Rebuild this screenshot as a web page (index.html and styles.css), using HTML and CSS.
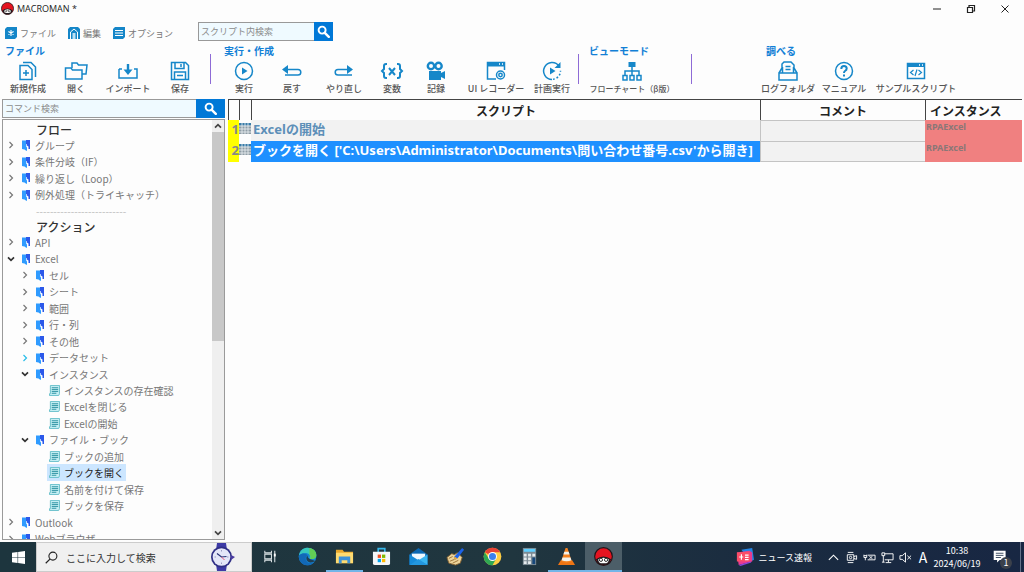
FILE: index.html
```html
<!DOCTYPE html>
<html lang="ja">
<head>
<meta charset="utf-8">
<title>MACROMAN *</title>
<link rel="stylesheet" href="styles.css">
</head>
<body>
<svg class="defs" aria-hidden="true">
  <symbol id="search" viewBox="0 0 16 16"><circle cx="6.3" cy="6.3" r="4.3" fill="none" stroke="currentColor" stroke-width="2.4"/><path d="M9.6 9.6 14.5 14.5" stroke="currentColor" stroke-width="3" stroke-linecap="round"/></symbol>
  <symbol id="arrow" viewBox="0 0 8 8"><path d="M2.5 1 5.5 4 2.5 7" fill="none" stroke="currentColor" stroke-width="1.2"/></symbol>
  <symbol id="down" viewBox="0 0 8 8"><path d="M1 2.3 4 5.3 7 2.3" fill="none" stroke="currentColor" stroke-width="1.7"/></symbol>
  <symbol id="folder" viewBox="0 0 10 12"><path d="M1 1.5h4.500v9.500L1 10z" fill="#2f9bff"/><path d="M5 1h4v9H7.500V7.500L5 6z" fill="#2b58ea"/><path d="M5.500 5v3" stroke="#d4e8ff" stroke-width=".8"/><path d="M4 7.500l2 1V12l-2-1z" fill="#2f9bff"/></symbol>
  <symbol id="doc" viewBox="0 0 12 12"><path d="M1.5.5h10v9l-1 2h-10v-2h1z" fill="#c4eef3" stroke="#62bdc8"/><path d="M3 3h7M3 5h7M3 7h7M3 9h5" stroke="#248c9e"/></symbol>
  <symbol id="mushroom" viewBox="0 0 20 20"><circle cx="10" cy="10" r="9.3" fill="#e51420" stroke="#231519" stroke-width="1.2"/><path d="M2 13Q10 7 18 13q-2 6-8 6t-8-6" fill="#201a1e"/><path d="M4.500 13Q10 9.500 15.500 13q0 3.500-2.500 4H7q-2.500-.5-2.500-4" fill="#fff"/><circle cx="7.300" cy="13.500" r="1.700" fill="#fff" stroke="#222"/><circle cx="12.700" cy="13.500" r="1.700" fill="#fff" stroke="#222"/></symbol>
  <symbol id="rowgrid" viewBox="0 0 12 11"><path d="M0 0h12v11H0z" fill="#8f9da6"/><path d="M0 0h12v2.500H0z" fill="#397ca8"/><path d="M0 3h12M0 6h12M0 9h12M3 0v11M6 0v11M9 0v11" stroke="#edf2f5" stroke-width=".8"/></symbol>
</svg>

<header class="titlebar">
  <svg class="app-icon"><use href="#mushroom"/></svg>
  <h1 class="title">MACROMAN *</h1>
  <div class="window-buttons">
    <button aria-label="最小化"><svg viewBox="0 0 10 10"><path d="M1 5h8" stroke="#222"/></svg></button>
    <button aria-label="元に戻す"><svg viewBox="0 0 10 10"><path d="M1.500 3.500h5v5h-5zM3 3V1.500h5.500V7H7" fill="none" stroke="#222" stroke-width="1.200"/></svg></button>
    <button aria-label="閉じる"><svg viewBox="0 0 10 10"><path d="M1.500 1.500 8.500 8.500M8.500 1.500 1.500 8.500" stroke="#222"/></svg></button>
  </div>
</header>

<nav class="menubar">
  <div class="menus">
    <button class="menu"><svg viewBox="0 0 12 12"><path d="M2 0h10v10l-2 2H0V2z" fill="#1586c8"/><path d="M6 3v6M3.400 4.500l5.200 3M8.600 4.500l-5.200 3" stroke="#fff" stroke-width="1.100"/></svg>ファイル</button>
    <button class="menu"><svg viewBox="0 0 12 12"><path d="M2 0h8l2 2v10H0V2z" fill="#1586c8"/><path d="M2.500 12V5L6 2l3.500 3v7" fill="none" stroke="#fff"/><path d="M4.500 6h3v6h-3z" fill="#bce0f4"/></svg>編集</button>
    <button class="menu"><svg viewBox="0 0 12 12"><path d="M2 0h10v10l-2 2H0V2z" fill="#1586c8"/><path d="M2 3.500h8M2 6h8M2 8.500h8" stroke="#fff"/></svg>オプション</button>
  </div>
  <form class="search script-search">
    <input type="text" placeholder="スクリプト内検索" aria-label="スクリプト内検索">
    <button type="button" aria-label="検索"><svg><use href="#search"/></svg></button>
  </form>
</nav>

<section class="ribbon">
  <div class="group">
    <h2>ファイル</h2>
    <div class="tools">
      <button class="tool"><svg viewBox="0 0 20 20"><path d="M2 4.500h8l4 4v10H2z"/><path d="M5 1.500h8l4.500 4.500V16"/><path d="M8 9v6M5 12h6"/></svg>新規作成</button>
      <button class="tool"><svg class="wide-icon" viewBox="0 0 24 20"><path d="M8 7V2h5l1.500 2H23l-1 9h-4"/><path d="M1.500 18V7H7l1.500 2H18v9z"/></svg>開く</button>
      <button class="tool w56"><svg viewBox="0 0 20 20"><path d="M1 8v9h18V8h-3M1 8h3"/><path d="M10 3v8" stroke-width="2.400"/><path class="solid" d="M5.500 8.500h9L10 14z"/></svg>インポート</button>
      <button class="tool"><svg viewBox="0 0 20 20"><path d="M1.500 1.500h14l3 3v14h-17z"/><path d="M5 2v5.500h9V2M11 3v3M4.500 18v-7h11v7M7 14.500h6"/></svg>保存</button>
    </div>
  </div>
  <div class="group run">
    <h2>実行・作成</h2>
    <div class="tools">
      <button class="tool"><svg viewBox="0 0 20 20"><circle cx="10" cy="10" r="8.500"/><path class="solid" d="M8 6.500v7l5.500-3.500z"/></svg>実行</button>
      <button class="tool"><svg viewBox="0 0 20 20"><path d="M3 8.500h13a2.800 2.800 0 0 1 0 5.600H3"/><path class="solid" d="M0 8.500 6 4v9z"/></svg>戻す</button>
      <button class="tool w56"><svg viewBox="0 0 20 20"><path d="M17 8.500H4a2.800 2.800 0 0 0 0 5.600h14"/><path class="solid" d="M19 8.500 13 4v9z"/></svg>やり直し</button>
      <button class="tool w40"><svg class="wide-icon" viewBox="0 0 24 20"><path d="M7 3H6Q4 3 4 5v3L2 10l2 2v3q0 2 2 2h1M17 3h1q2 0 2 2v3l2 2-2 2v3q0 2-2 2h-1M9 7l6 7M15 7l-6 7" stroke-width="2"/></svg>変数</button>
      <button class="tool"><svg viewBox="0 0 20 20"><circle cx="5" cy="5" r="3.200" stroke-width="2.400"/><circle cx="12.500" cy="5" r="3.200" stroke-width="2.400"/><path class="solid" d="M3 10h12v2l4-2v8l-4-2v3H3z"/></svg>記録</button>
      <button class="tool w72"><svg viewBox="0 0 20 20"><path d="M10 18H1.500V1.500h17V9"/><path class="solid" d="M1 1h18v4.500H1z"/><path d="M13 3h1M16 3h1" stroke="#fff"/><circle cx="14.500" cy="14" r="4"/><circle cx="14.500" cy="14" r="1.700"/></svg>UI レコーダー</button>
      <button class="tool w40"><svg viewBox="0 0 20 20"><path d="M17 5a8.500 8.500 0 1 0-7 13.500"/><path d="M11 18.300a8.500 8.500 0 0 0 7.500-8.500" stroke-dasharray="1.800 2"/><path class="solid" d="M18.500 1v6h-6zM8 6.500v7l5.500-3.500z"/></svg>計画実行</button>
    </div>
  </div>
  <div class="group view">
    <h2>ビューモード</h2>
    <div class="tools">
      <button class="tool w88"><svg viewBox="0 0 20 20"><path class="solid" d="M6.500 1h7v5h-7z"/><path d="M10 6v8M3 14v-4h14v4M1 14.500h4V19H1zM8 14.500h4V19H8zM15 14.500h4V19h-4z"/></svg>フローチャート（β版）</button>
    </div>
  </div>
  <div class="group inspect">
    <h2>調べる</h2>
    <div class="tools">
      <button class="tool w56"><svg viewBox="0 0 20 20"><path d="M1 12h18v7H1zM1 12l3-5v-4l2-2h7l3 3v3l3 5M4.500 12V6M15.500 12V6M7.500 5.500h5M7.500 8.500h5"/></svg>ログフォルダ</button>
      <button class="tool w56"><svg viewBox="0 0 20 20"><circle cx="10" cy="10" r="8.500"/><path d="M7.300 8q0-3 2.700-3t2.700 2.500q0 1.500-1.700 2.500-1 .7-1 2M10 13.500v2" stroke-width="2"/></svg>マニュアル</button>
      <button class="tool w88"><svg viewBox="0 0 20 20"><path d="M1.500 2.500h17v15h-17z"/><path class="solid" d="M1 2h18v4H1z"/><path d="M13 4h1M16 4h1" stroke="#fff"/><path d="M7.500 9 4.500 11.500l3 2.500M12.500 9l3 2.500-3 2.500M11 8.500l-2 6.500" stroke-width="1.200"/></svg>サンプルスクリプト</button>
    </div>
  </div>
</section>

<main class="workspace">
  <aside class="sidebar">
    <form class="search command-search">
      <input type="text" placeholder="コマンド検索" aria-label="コマンド検索">
      <button type="button" aria-label="検索"><svg><use href="#search"/></svg></button>
    </form>
    <div class="tree-box">
      <div class="tree">
        <h3>フロー</h3>
        <ul>
          <li><div class="row"><button class="toggle" aria-label="展開"><svg><use href="#arrow"/></svg></button><svg class="folder"><use href="#folder"/></svg><span>グループ</span></div></li>
          <li><div class="row"><button class="toggle" aria-label="展開"><svg><use href="#arrow"/></svg></button><svg class="folder"><use href="#folder"/></svg><span>条件分岐（IF）</span></div></li>
          <li><div class="row"><button class="toggle" aria-label="展開"><svg><use href="#arrow"/></svg></button><svg class="folder"><use href="#folder"/></svg><span>繰り返し（Loop）</span></div></li>
          <li><div class="row"><button class="toggle" aria-label="展開"><svg><use href="#arrow"/></svg></button><svg class="folder"><use href="#folder"/></svg><span>例外処理（トライキャッチ）</span></div></li>
        </ul>
        <div class="divider">--------------------------</div>
        <h3>アクション</h3>
        <ul>
          <li><div class="row"><button class="toggle" aria-label="展開"><svg><use href="#arrow"/></svg></button><svg class="folder"><use href="#folder"/></svg><span>API</span></div></li>
          <li><div class="row"><button class="toggle open" aria-label="折りたたむ"><svg><use href="#down"/></svg></button><svg class="folder"><use href="#folder"/></svg><span>Excel</span></div>
            <ul>
              <li><div class="row"><button class="toggle" aria-label="展開"><svg><use href="#arrow"/></svg></button><svg class="folder"><use href="#folder"/></svg><span>セル</span></div></li>
              <li><div class="row"><button class="toggle" aria-label="展開"><svg><use href="#arrow"/></svg></button><svg class="folder"><use href="#folder"/></svg><span>シート</span></div></li>
              <li><div class="row"><button class="toggle" aria-label="展開"><svg><use href="#arrow"/></svg></button><svg class="folder"><use href="#folder"/></svg><span>範囲</span></div></li>
              <li><div class="row"><button class="toggle" aria-label="展開"><svg><use href="#arrow"/></svg></button><svg class="folder"><use href="#folder"/></svg><span>行・列</span></div></li>
              <li><div class="row"><button class="toggle" aria-label="展開"><svg><use href="#arrow"/></svg></button><svg class="folder"><use href="#folder"/></svg><span>その他</span></div></li>
              <li><div class="row"><button class="toggle hot" aria-label="展開"><svg><use href="#arrow"/></svg></button><svg class="folder"><use href="#folder"/></svg><span>データセット</span></div></li>
              <li><div class="row"><button class="toggle open" aria-label="折りたたむ"><svg><use href="#down"/></svg></button><svg class="folder"><use href="#folder"/></svg><span>インスタンス</span></div>
                <ul>
                  <li><button class="row leaf"><svg><use href="#doc"/></svg>インスタンスの存在確認</button></li>
                  <li><button class="row leaf"><svg><use href="#doc"/></svg>Excelを閉じる</button></li>
                  <li><button class="row leaf"><svg><use href="#doc"/></svg>Excelの開始</button></li>
                </ul>
              </li>
              <li><div class="row"><button class="toggle open" aria-label="折りたたむ"><svg><use href="#down"/></svg></button><svg class="folder"><use href="#folder"/></svg><span>ファイル・ブック</span></div>
                <ul>
                  <li><button class="row leaf"><svg><use href="#doc"/></svg>ブックの追加</button></li>
                  <li><button class="row leaf selected"><svg><use href="#doc"/></svg>ブックを開く</button></li>
                  <li><button class="row leaf"><svg><use href="#doc"/></svg>名前を付けて保存</button></li>
                  <li><button class="row leaf"><svg><use href="#doc"/></svg>ブックを保存</button></li>
                </ul>
              </li>
            </ul>
          </li>
          <li><div class="row"><button class="toggle" aria-label="展開"><svg><use href="#arrow"/></svg></button><svg class="folder"><use href="#folder"/></svg><span>Outlook</span></div></li>
          <li><div class="row"><button class="toggle" aria-label="展開"><svg><use href="#arrow"/></svg></button><svg class="folder"><use href="#folder"/></svg><span>Webブラウザ</span></div></li>
        </ul>
      </div>
      <div class="scrollbar">
        <button aria-label="上へ"><svg class="flip"><use href="#down"/></svg></button>
        <div class="track"><div class="thumb"></div></div>
        <button aria-label="下へ"><svg><use href="#down"/></svg></button>
      </div>
    </div>
  </aside>

  <section class="editor">
    <table>
      <colgroup><col class="c-num"><col class="c-icon"><col><col class="c-comment"><col class="c-instance"></colgroup>
      <thead><tr><th></th><th></th><th>スクリプト</th><th>コメント</th><th class="left">インスタンス</th></tr></thead>
      <tbody>
        <tr><td class="num">1</td><td class="grid"><svg><use href="#rowgrid"/></svg></td><td class="cmd">Excelの開始</td><td class="comment"></td><td class="instance">RPAExcel</td></tr>
        <tr class="active"><td class="num">2</td><td class="grid"><svg><use href="#rowgrid"/></svg></td><td class="cmd">ブックを開く ['C:\Users\Administrator\Documents\問い合わせ番号.csv'から開き]</td><td class="comment"></td><td class="instance">RPAExcel</td></tr>
      </tbody>
    </table>
  </section>
</main>

<footer class="taskbar">
  <button class="start" aria-label="スタート"><svg viewBox="0 0 14 14"><path d="M0 2l6-.900v5.500H0zM6.600 1 14 0v6.600H6.600zM0 7.300h6v5.500L0 12zM6.600 7.300H14V14l-7.400-1z" fill="#fff"/></svg></button>
  <div class="task-search">
    <svg class="lens" viewBox="0 0 14 14"><circle cx="8.500" cy="5.500" r="4.300" fill="none" stroke="#222" stroke-width="1.200"/><path d="M5.300 8.700.800 13.200" stroke="#222" stroke-width="1.300"/></svg>
    <input type="text" placeholder="ここに入力して検索" aria-label="ここに入力して検索">
    <svg class="watch" viewBox="0 0 26 28"><path d="M8 0h9l1 7H7zM7 21h11l-1 7H8z" fill="#3d3aa6"/><circle cx="12.500" cy="14" r="10.500" fill="#302f86"/><path d="M22 12l4 2-4 3z" fill="#493aa0"/><circle cx="12.500" cy="14" r="8.800" fill="#e4e6f8"/><path d="M12.500 7v1.500M12.500 19.500V21M5.500 14H7M18 14h1.500" stroke="#9a9cc4"/><path d="M8 10.500 12.500 14l5-.500" fill="none" stroke="#293075" stroke-width="1.200"/><path d="M12.500 14l3 3" stroke="#e55678"/></svg>
  </div>
  <nav class="apps">
    <button aria-label="タスク ビュー"><svg viewBox="0 0 20 20"><path d="M4 4v2h7V4M4 16v-2h7v2M4 7.500h7v5H4zM14.500 4v12" fill="none" stroke="#dce3e6" stroke-width="1.100"/><path d="M13.500 7h2v3h-2z" fill="#fff"/></svg></button>
    <button aria-label="Edge"><svg viewBox="0 0 20 20"><circle cx="10" cy="10" r="9.300" fill="#1684d1"/><path d="M1 9C2 3 6 .700 10 .700c6 0 10 4.500 9.300 8.500-.6 3.300-3.800 4-6.300 3.300-1.500-.4-1-1.500-.5-2.500C13 7 7 4 1 9" fill="#38c7bd"/><path d="M12 1c6 1 8 6 7 9-1 3-4.500 3.200-6.500 2.200 1-1 .8-3-.5-4.200" fill="#62cd55"/><path d="M1 9c4-3.500 8-2 9 0-2 1-3 4 0 7 2 1.700 5 1 7-.5-2 3-5 4-8 3.800C4 19 .3 14 1 9" fill="#1268b7"/><path d="M10 9c-2 2-1.500 6 2 7 2 .6 4 0 6-1-1-1-3-1-5-2s-3-2-3-4" fill="#203f54"/></svg></button>
    <button class="running" aria-label="エクスプローラー"><svg viewBox="0 0 20 20"><path d="M1 3h7l1.500 2H19v12H1z" fill="#e8a72b"/><path d="M1 6h18v11H1z" fill="#ffdb70"/><path d="M4 10h12v7h-3v-3H7v3H4z" fill="#3c91d8"/></svg></button>
    <button aria-label="Store"><svg viewBox="0 0 20 20"><path d="M6.500 6V1.700h7V6" fill="none" stroke="#36b8eb" stroke-width="1.700"/><path d="M1 5h18v12q0 2-2 2H3q-2 0-2-2z" fill="#f4f6f8"/><path d="M6 8h3.500v3.500H6z" fill="#f25022"/><path d="M10.500 8H14v3.500h-3.500z" fill="#7fba00"/><path d="M6 12.500h3.500V16H6z" fill="#00a4ef"/><path d="M10.500 12.500H14V16h-3.500z" fill="#ffb900"/></svg></button>
    <button aria-label="メール"><svg viewBox="0 0 20 20"><path d="M.5 8 10 1l9.500 7v11H.5z" fill="#0b67b2"/><path d="M3 7h14v8H3z" fill="#eef8ff"/><path d="M.5 8 10 14 .5 19z" fill="#168bd9"/><path d="M19.500 8 10 14l9.500 5z" fill="#39b5f1"/><path d="M.5 19 10 12.500l9.500 6.500z" fill="#2397df"/></svg></button>
    <button aria-label="エディター"><svg viewBox="0 0 20 20"><path d="M1 11l5-4 3 1 3-2 5 5-2 6-5 2-7-2z" fill="#ecd39a" stroke="#836132"/><path d="M3 12l4-2M4 15l5-2M7 17l6-3" stroke="#9c7439"/><path d="M9 10 17 1l2 2-7 9-4 2z" fill="#1c62e7"/><path d="M8 14l1-4 3 2z" fill="#efab37"/></svg></button>
    <button aria-label="Chrome"><svg viewBox="0 0 20 20"><circle cx="10" cy="10" r="9.300" fill="#ffce43"/><path d="M10 10 1.900 5.400A9.300 9.300 0 0 1 18.100 5.400H10z" fill="#e84335"/><path d="M1.900 5.400A9.300 9.300 0 0 0 10 19.300l4-7.300-4 2-4-2z" fill="#30a853"/><circle cx="10" cy="10" r="4.700" fill="#fff"/><circle cx="10" cy="10" r="3.700" fill="#3c80ed"/></svg></button>
    <button aria-label="電卓"><svg viewBox="0 0 20 20"><path d="M3 1h14v18H3z" fill="#7c8b94"/><path d="M4 2h12v3H4z" fill="#60cfff"/><path d="M4 7h3v3H4zM8.500 7h3v3h-3zM13 7h3v3h-3zM4 11h3v3H4zM8.500 11h3v3h-3zM4 15h3v3H4zM8.500 15h3v3h-3z" fill="#e5ebed"/><path d="M13 11h3v7h-3z" fill="#17477a"/></svg></button>
    <button class="running" aria-label="VLC"><svg viewBox="0 0 20 20"><path d="M4 14h12l3 5H1z" fill="#ef7514"/><path d="M9 1h2l4.500 14q-5.500 3-11 0z" fill="#f58220"/><path d="M7.700 5h4.600l1 3H6.700zM5.800 11h8.400l1 3q-5 2-10.400 0z" fill="#f2f2ec"/></svg></button>
    <button class="running current" aria-label="MACROMAN"><svg><use href="#mushroom"/></svg></button>
  </nav>
  <div class="tray">
    <button class="news"><svg viewBox="0 0 20 20"><path d="M6 2 18 0l2 13-4 2z" fill="#2485e5"/><path d="M1 5l14-2 3 2v10L3 19z" fill="#e83b91"/><path d="M1 5l14-1 1 11H1z" fill="#fb4d68"/><path d="M3 19l13-4 1 1-12 4z" fill="#8c45dc"/><path d="M6 7v6M3.500 10H8M10 8h4M10 10.500h4M10 13h4" stroke="#fff" stroke-width="1.300"/></svg>ニュース速報</button>
    <button aria-label="隠れているインジケーター"><svg viewBox="0 0 14 14"><path d="M2 9.500 7 4.500l5 5" fill="none" stroke="#fff" stroke-width="1.200"/></svg></button>
    <button aria-label="カメラ"><svg viewBox="0 0 14 14"><path d="M2.500 4h7v6h-7zM9.500 6l3-1v4l-3-1M3 1.500h6M3 12.500h6" fill="none" stroke="#fff"/><circle cx="6" cy="7" r="1.300" fill="none" stroke="#fff"/></svg></button>
    <button aria-label="バッテリー"><svg viewBox="0 0 14 14"><path d="M1 4v3h3V4M2.500 7v3M5 4.500h8v5H5M7 5.500l3 3M10 5.500l-3 3M1 5h3" fill="none" stroke="#fff"/></svg></button>
    <button aria-label="ネットワーク"><svg viewBox="0 0 14 14"><path d="M4 3h9v6.500H4M8 9.500V12M5 12.500h6M1 2h3v3H1zM2.500 5v7M1 12h3" fill="none" stroke="#fff"/></svg></button>
    <button aria-label="音量"><svg viewBox="0 0 14 14"><path d="M1 5h2.500L7 2v10L3.500 9H1zM9 5l4 4M13 5l-4 4" fill="none" stroke="#fff"/></svg></button>
    <button class="ime">A</button>
    <button class="clock"><span>10:38</span><span>2024/06/19</span></button>
    <button class="notify" aria-label="通知"><svg viewBox="0 0 20 20"><path d="M2 2h14v11H9l-3 3v-3H2z" fill="#fff"/><path d="M4.500 5h9M4.500 7.500h9M4.500 10h6" stroke="#25364d"/></svg><span class="badge">1</span></button>
    <span class="desktop-edge"></span>
  </div>
</footer>
</body>
</html>
```

FILE: styles.css
```css
* { box-sizing: border-box; }
body {
  margin: 0;
  height: 100vh;
  display: flex;
  flex-direction: column;
  overflow: hidden;
  background: #fdfdfd;
  color: #777;
  font: 10px "Noto Sans CJK JP", "Noto Sans", sans-serif;
}
button, input { font: inherit; color: inherit; }
button { border: 0; padding: 0; background: none; display: flex; align-items: center; justify-content: center; white-space: nowrap; }
h1, h2, h3, ul { margin: 0; padding: 0; list-style: none; }
svg { display: block; flex: none; }
.defs { position: absolute; width: 0; height: 0; }

.titlebar { display: flex; align-items: center; height: 17px; padding: 0 2px 0 1px; gap: 3px; }
.app-icon { width: 13px; height: 13px; }
.title { font: 9px "Open Sans", sans-serif; color: #222; }
.window-buttons { display: flex; margin-left: auto; }
.window-buttons button { width: 34px; height: 15px; }
.window-buttons svg { width: 10px; height: 10px; }

.menubar { display: flex; height: 27px; padding: 5px 5px 0; }
.menus { display: flex; gap: 12px; width: 193px; padding-top: 4px; }
.menu { gap: 3px; height: 14px; font-size: 9px; }
.menu svg { width: 12px; height: 12px; }

.search { display: flex; }
.search input { flex: 1; min-width: 0; border: 1px solid #999; border-right: 0; border-radius: 0; padding: 0 2px; background: #effaff; font-size: 9px; outline: 0; }
.search input::placeholder { color: #8b8b8b; }
.search button { background: #0078d7; color: #fff; }
.search svg { width: 13px; height: 13px; }
.script-search { width: 135px; height: 19px; }
.script-search button { width: 19px; }

.ribbon { display: flex; height: 54px; padding-left: 4px; }
.group { position: relative; padding-right: 16px; }
.group h2 { font-size: 10px; font-weight: 700; line-height: 14px; color: #1280d6; padding-left: 1px; }
.group:not(:last-child)::after { content: ""; position: absolute; right: 9px; top: 10px; height: 30px; border-right: 1px solid #8e6bd6; }
.group.view { padding-right: 84px; }
.group.view::after { right: 76px; }
.group.view { padding-right: 84px; }
.group.view:not(:last-child)::after { right: auto; left: 103px; }
.group.run h2, .group.inspect h2 { padding-left: 4px; }
.group.inspect h2 { padding-left: 6px; }
.tools { display: flex; }
.tool { flex-direction: column; width: 48px; gap: 1px; padding-top: 3px; font-size: 9px; font-weight: 500; line-height: 13px; color: #555; }
.tool svg { width: 20px; height: 20px; fill: none; stroke: #1687c9; stroke-width: 1.5; }
.tool .wide-icon { width: 24px; }
.tool .solid { fill: #1687c9; stroke: none; }
.view .tool { font-size: 8px; }
.w40 { width: 40px; }
.tool.w56 { width: 56px; }
.tool.w72 { width: 72px; }
.tool.w88 { width: 88px; }
.tool.w40 { width: 40px; }

.workspace { flex: 1; min-height: 0; display: flex; gap: 3px; padding: 1px 2px 2px; }
.sidebar { width: 223px; display: flex; flex-direction: column; gap: 1px; }
.command-search { height: 19px; }
.command-search button { width: 29px; }
.tree-box { flex: 1; min-height: 0; display: flex; border: 1px solid #9a9a9a; }
.tree { flex: 1; min-width: 0; overflow: hidden; padding-top: 2px; }
.tree h3 { font-size: 12px; font-weight: 500; line-height: 15px; color: #333; padding-left: 33px; }
.tree ul ul { padding-left: 14px; }
.row { display: flex; align-items: center; height: 16px; white-space: nowrap; }
li:nth-child(even) > .row { height: 17px; }
.toggle { width: 16px; height: 16px; margin-right: 2px; color: #777; }
.toggle svg { width: 8px; height: 8px; }
.open { color: #333; }
.hot { color: #29bde8; }
.folder { width: 10px; height: 12px; margin-right: 4px; }
.leaf { margin-left: 16px; padding: 0 2px; gap: 4px; }
.leaf svg { width: 11px; height: 11px; }
.selected { background: #cce6ff; color: #222; }
.divider { padding-left: 33px; line-height: 16px; color: #bbb; }
.scrollbar { width: 12px; display: flex; flex-direction: column; background: #efefef; }
.scrollbar button { height: 12px; color: #444; }
.scrollbar svg { width: 8px; height: 8px; }
.flip { transform: rotate(180deg); }
.track { flex: 1; }
.thumb { height: 53%; background: #c8c8c8; }

.editor { flex: 1; min-width: 0; }
table { width: 100%; table-layout: fixed; border-collapse: separate; border-spacing: 0; border-top: 1px solid #444; }
.c-num { width: 11px; }
.c-icon { width: 12px; }
.c-comment { width: 165px; }
.c-instance { width: 97px; }
th { height: 20px; padding: 1px 0 0; border-left: 1px solid #444; font-size: 12px; line-height: 18px; color: #222; text-align: center; }
th.left { text-align: left; padding-left: 4px; }
td { height: 21px; padding: 0; line-height: 18px; overflow: hidden; white-space: nowrap; font-family: "Noto Sans", "Noto Sans CJK JP", sans-serif; font-weight: 700; vertical-align: top; }
.num { background: #ff0; color: #888; font-size: 13px; text-align: right; }
.grid { padding-top: 3px; }
.grid svg { width: 12px; height: 11px; }
.cmd { padding-left: 2px; background: #f2f2f2; color: #5d8fb8; font-size: 13px; }
.active .cmd { background: #1e90ff; color: #fff; }
.comment { background: #f2f2f2; border: 1px solid #c4c4c4; border-width: 1px 0 0 1px; }
.active .comment { border-bottom-width: 1px; }
.instance { background: #f08080; color: #8b7777; padding-left: 1px; font-size: 9px; line-height: 14px; }

.taskbar { display: flex; height: 30px; background: linear-gradient(90deg, #1d353e, #20363f 50%, #1a2b40 75%, #182743); color: #fff; }
.start { width: 36px; }
.start svg { width: 13px; height: 13px; }
.task-search { width: 216px; display: flex; align-items: center; padding: 0 16px 0 8px; gap: 8px; background: #f0f0f0; border: 1px solid #ccc; color: #222; }
.lens { width: 13px; height: 13px; }
.task-search input { flex: 1; min-width: 0; padding: 0; border: 0; background: none; font-size: 10px; outline: 0; }
.task-search input::placeholder { color: #333; }
.watch { width: 26px; height: 28px; }
.apps { display: flex; }
.apps button { width: 37px; border-bottom: 2px solid transparent; }
.apps svg { width: 19px; height: 19px; }
.apps .running { border-color: #72b5e8; }
.apps .current { background: #4c5e68; }
.tray { display: flex; margin-left: auto; }
.tray button { width: 18px; }
.tray svg { width: 13px; height: 13px; }
.tray .news { width: auto; gap: 4px; margin-right: 12px; font-size: 9px; }
.tray .news svg { width: 18px; height: 18px; }
.tray .ime { font-size: 14px; }
.tray .clock { width: 50px; flex-direction: column; font-size: 9px; line-height: 13px; }
.tray .notify { position: relative; width: 36px; }
.tray .notify svg { width: 17px; height: 17px; }
.badge { position: absolute; right: 6px; bottom: 3px; width: 12px; height: 12px; border-radius: 6px; background: #3b414b; font-size: 9px; line-height: 12px; text-align: center; }
.desktop-edge { width: 4px; margin-left: 2px; border-left: 1px solid #65728a; }
```
